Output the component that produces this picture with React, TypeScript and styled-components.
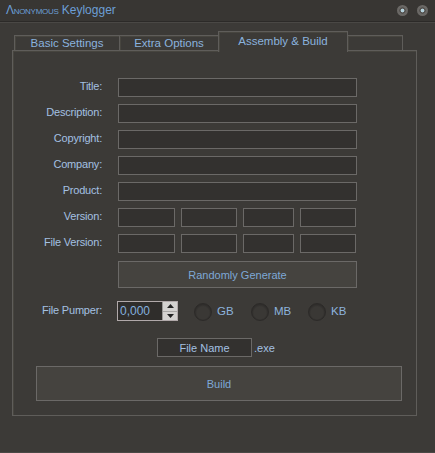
import styled, { createGlobalStyle } from 'styled-components';

const GlobalStyle = createGlobalStyle`
  html, body {
    margin: 0;
    padding: 0;
    background: #3c3a37;
  }
  * {
    box-sizing: border-box;
  }
`;

const fields = ['Title:', 'Description:', 'Copyright:', 'Company:', 'Product:'];
const versionWidths = [57, 56, 51, 56];

function App() {
  return (
    <>
      <GlobalStyle />
      <Window>
        <TitleBar>
          <TitleText>
            <SmallCaps>Λnonymous</SmallCaps> Keylogger
          </TitleText>
          <TitleButtons>
            <TitleButton />
            <TitleButton />
          </TitleButtons>
        </TitleBar>

        <Body>
          <TabStrip>
            <Tab $width={106}>Basic Settings</Tab>
            <Tab $width={100}>Extra Options</Tab>
            <Tab $width={130} $active>
              Assembly &amp; Build
            </Tab>
            <Tab $width={56} />
          </TabStrip>

          <Panel>
            <Fields>
              {fields.map((label) => (
                <FieldRow key={label}>
                  <Label>{label}</Label>
                  <TextBox />
                </FieldRow>
              ))}
              <FieldRow>
                <Label>Version:</Label>
                <VersionBoxes>
                  {versionWidths.map((w, i) => (
                    <SmallBox key={i} $width={w} />
                  ))}
                </VersionBoxes>
              </FieldRow>
              <FieldRow>
                <Label>File Version:</Label>
                <VersionBoxes>
                  {versionWidths.map((w, i) => (
                    <SmallBox key={i} $width={w} />
                  ))}
                </VersionBoxes>
              </FieldRow>
            </Fields>

            <GenerateRow>
              <Label />
              <GenerateButton>Randomly Generate</GenerateButton>
            </GenerateRow>

            <PumperRow>
              <Label>File Pumper:</Label>
              <Spinner>
                <SpinnerValue>0,000</SpinnerValue>
                <SpinnerArrows>
                  <Arrow>
                    <svg width="7" height="4" viewBox="0 0 7 4">
                      <path d="M3.5 0 L7 4 L0 4 Z" fill="#222" />
                    </svg>
                  </Arrow>
                  <Arrow>
                    <svg width="7" height="4" viewBox="0 0 7 4">
                      <path d="M0 0 L7 0 L3.5 4 Z" fill="#222" />
                    </svg>
                  </Arrow>
                </SpinnerArrows>
              </Spinner>
              <Radios>
                {['GB', 'MB', 'KB'].map((unit) => (
                  <RadioItem key={unit}>
                    <RadioCircle />
                    <RadioText>{unit}</RadioText>
                  </RadioItem>
                ))}
              </Radios>
            </PumperRow>

            <FileNameRow>
              <FileNameBox>File Name</FileNameBox>
              <Extension>.exe</Extension>
            </FileNameRow>

            <BuildButton>Build</BuildButton>
          </Panel>
        </Body>
      </Window>
    </>
  );
}

const Window = styled.div`
  width: 435px;
  height: 453px;
  background: #3c3a37;
  font-family: 'Liberation Sans', Arial, sans-serif;
  font-size: 11px;
  display: flex;
  flex-direction: column;
  border-bottom: 1px solid #4a4845;
`;

const TitleBar = styled.div`
  height: 22px;
  display: flex;
  align-items: center;
  justify-content: space-between;
  padding: 0 6px 0 6px;
  background: #383633;
  border-bottom: 1px solid #2c2a28;
  box-shadow: 0 1px 0 #4a4845;
`;

const TitleText = styled.div`
  color: #6c9fd6;
  font-size: 12px;
  margin-top: -1px;
`;

const SmallCaps = styled.span`
  font-variant: small-caps;
  letter-spacing: -0.3px;
`;

const TitleButtons = styled.div`
  display: flex;
  gap: 9px;
  padding-right: 1px;
`;

const TitleButton = styled.div`
  width: 11px;
  height: 11px;
  border-radius: 50%;
  background: radial-gradient(circle, #b5d2dc 0 1.6px, #555350 2.2px 3px, #6a6865 3.5px 5.5px);
`;

const Body = styled.div`
  padding: 9px 18px 0 12px;
  display: flex;
  flex-direction: column;
`;

const TabStrip = styled.div`
  display: flex;
  align-items: flex-end;
  padding-left: 3px;
  height: 20px;
  position: relative;
  z-index: 1;
  margin-bottom: -1px;
`;

const Tab = styled.div<{ $width: number; $active?: boolean }>`
  width: ${(p) => p.$width}px;
  height: ${(p) => (p.$active ? 21 : 16)}px;
  border: 1px solid #5f5d5a;
  border-bottom: ${(p) => (p.$active ? 'none' : '1px solid #5f5d5a')};
  box-shadow: inset 1px 1px 0 #47453f;
  background: #3c3a37;
  color: #8ab2de;
  font-size: 11.5px;
  display: flex;
  justify-content: center;
  align-items: ${(p) => (p.$active ? 'flex-start' : 'flex-end')};
  padding-top: ${(p) => (p.$active ? 2 : 0)}px;
  line-height: 14px;
  overflow: hidden;
  margin-left: -1px;
  margin-bottom: ${(p) => (p.$active ? -1 : 0)}px;
`;

const Panel = styled.div`
  width: 405px;
  height: 366px;
  border: 1px solid #5f5d5a;
  box-shadow: inset 1px 1px 0 #47453f;
  display: flex;
  flex-direction: column;
  padding-top: 27px;
`;

const Fields = styled.div`
  display: flex;
  flex-direction: column;
  gap: 7px;
`;

const FieldRow = styled.div`
  display: flex;
  align-items: center;
  height: 19px;
`;

const Label = styled.div`
  width: 89px;
  margin-right: 16px;
  text-align: right;
  color: #a4c0e2;
  font-size: 11px;
  letter-spacing: -0.2px;
  margin-top: -3px;
  flex-shrink: 0;
`;

const TextBox = styled.div`
  width: 239px;
  height: 19px;
  background: #33312f;
  border: 1px solid #6b6967;
`;

const VersionBoxes = styled.div`
  display: flex;
  gap: 6px;
`;

const SmallBox = styled(TextBox)<{ $width: number }>`
  width: ${(p) => p.$width}px;
`;

const GenerateRow = styled.div`
  display: flex;
  margin-top: 8px;
`;

const GenerateButton = styled.div`
  width: 239px;
  height: 27px;
  background: #45433f;
  border: 1px solid #6b6967;
  color: #7ea8d6;
  font-size: 11px;
  display: flex;
  align-items: center;
  justify-content: center;
`;

const PumperRow = styled.div`
  display: flex;
  align-items: center;
  margin-top: 13px;
  height: 20px;
`;

const Spinner = styled.div`
  display: flex;
  width: 61px;
  height: 20px;
  border: 1px solid #b1a9aa;
  margin-left: -1px;
  background: #2f2d2b;
`;

const SpinnerValue = styled.div`
  flex: 1;
  color: #84b0de;
  font-size: 12px;
  line-height: 18px;
  padding-left: 2px;
`;

const SpinnerArrows = styled.div`
  width: 15px;
  display: flex;
  flex-direction: column;
  background: #d4d2d0;
  border-left: 1px solid #9a9896;
`;

const Arrow = styled.div`
  flex: 1;
  display: flex;
  align-items: center;
  justify-content: center;
  & + & {
    border-top: 1px solid #a8a6a4;
  }
`;

const Radios = styled.div`
  display: flex;
  gap: 16px;
  margin-left: 16px;
`;

const RadioItem = styled.div`
  display: flex;
  align-items: center;
  gap: 5px;
`;

const RadioCircle = styled.div`
  width: 18px;
  height: 18px;
  border-radius: 50%;
  background: radial-gradient(circle at 50% 55%, #3a3835 0 6px, #302e2c 8px);
  border: 1px solid #2c2a28;
  margin-top: 2px;
`;

const RadioText = styled.div`
  color: #8cb3dd;
  font-size: 11.5px;
  width: 18px;
`;

const FileNameRow = styled.div`
  display: flex;
  align-items: center;
  justify-content: center;
  margin-top: 17px;
  padding-left: 2px;
`;

const FileNameBox = styled.div`
  width: 95px;
  height: 19px;
  background: #33312f;
  border: 1px solid #6b6967;
  color: #a4c0e2;
  font-size: 11px;
  display: flex;
  align-items: center;
  justify-content: center;
`;

const Extension = styled.div`
  color: #a4c0e2;
  font-size: 11px;
  margin-left: 2px;
  width: 20px;
`;

const BuildButton = styled.div`
  margin: 9px 0 0 23px;
  width: 366px;
  height: 35px;
  background: #45433f;
  border: 1px solid #6b6967;
  color: #7ea8d6;
  font-size: 11px;
  display: flex;
  align-items: center;
  justify-content: center;
`;

export default App;
